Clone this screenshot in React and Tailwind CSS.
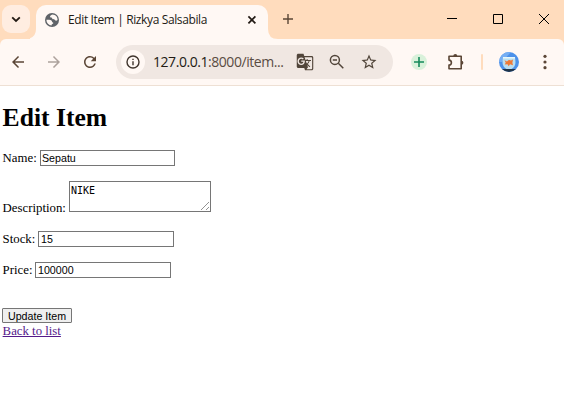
import React from "react";
import { MdArrowBack, MdArrowForward, MdRefresh, MdGTranslate, MdStarBorder } from "react-icons/md";

function TabStrip() {
  return (
    <div className="flex h-[39px] items-start bg-[#ffdcbd]">
      <div className="ml-[2px] mt-[5px] flex h-7 w-7 items-center justify-center rounded-[9px] bg-[#ffede1]">
        <svg width="10" height="7" viewBox="0 0 10 7" fill="none" stroke="#221a14" strokeWidth="1.8">
          <path d="M1.2 1.3 5 5l3.8-3.7" />
        </svg>
      </div>
      <svg className="mt-[29px] h-[10px] w-[6px] shrink-0" viewBox="0 0 6 10" fill="#fff8f4">
        <path d="M6 0v10H0V9.3Q6 7 6 0z" />
      </svg>
      <div className="mt-[5px] flex h-[34px] w-[232px] items-center rounded-t-[10px] bg-[#fff8f4] pb-[5px]">
        <svg className="ml-[9px] shrink-0" width="14" height="14" viewBox="0 0 14 14">
          <circle cx="7" cy="7" r="7" fill="#5f6368" />
          <path d="M7.5 1.4C5.6 2 4.6 3 5.2 4c.5.8 1.7.3 1.9 1.3.1.9 1.2 1.1 2.2 1.1.9.1.8 1.2 1.8 1.3.8 0 1.2-.4 1.5-.9A5.6 5.6 0 0 0 7.5 1.4z" fill="#fff8f4" />
          <path d="M1.4 6.8c1.7.1 3.9-.2 5 .8.8.8.5 1.8 1.5 2 .7.1.5 1.2-.4 1.3-.9.2-.9.8-.8 1.6A5.6 5.6 0 0 1 1.4 6.8z" fill="#fff8f4" />
        </svg>
        <span className="ml-[9px] w-[142px] whitespace-nowrap font-['Open_Sans',sans-serif] text-[12px] leading-4 tracking-[-0.38px] text-[#221a14]">
          Edit Item | Rizkya Salsabila
        </span>
        <svg className="ml-[37px] shrink-0" width="10" height="10" viewBox="0 0 10 10" stroke="#221a14" strokeWidth="1.7">
          <path d="m1.4 1.4 7 7m0-7-7 7" />
        </svg>
      </div>
      <svg className="mt-[29px] h-[10px] w-[10px]" viewBox="0 0 10 10" fill="#fff8f4">
        <path d="M0 0v10h10Q0 10 0 0z" />
      </svg>
      <svg className="ml-[5px] mt-[14px]" width="10" height="10" viewBox="0 0 10 10" stroke="#5b4636" strokeWidth="1.4">
        <path d="M0 5h10M5 0v10" />
      </svg>
      <svg className="ml-[154px] mt-[14px]" width="10" height="10" viewBox="0 0 10 10" stroke="#000">
        <path d="M0 4.5h10" />
      </svg>
      <svg className="ml-9 mt-[14px]" width="10" height="10" viewBox="0 0 10 10" stroke="#000" fill="none">
        <path d="M.5.5h9v9h-9z" />
      </svg>
      <svg className="ml-9 mt-[14px]" width="10" height="10" viewBox="0 0 10 10" stroke="#000">
        <path d="m0 0 10 10M10 0 0 10" />
      </svg>
    </div>
  );
}

function AddressBar() {
  return (
    <div className="ml-[17px] flex h-[34px] w-[277px] items-center rounded-full bg-[#f0e7e2]">
      <div className="ml-[5px] flex h-6 w-6 items-center justify-center rounded-full bg-[#fff8f4]">
        <svg width="14" height="14" viewBox="0 0 14 14" fill="none" stroke="#40352d" strokeWidth="1.4">
          <circle cx="7" cy="7" r="6" />
          <path d="M7 6.2v4M7 3.7v1.4" />
        </svg>
      </div>
      <span className="ml-2 w-[136px] whitespace-nowrap font-['Open_Sans',sans-serif] text-[14px] leading-5 tracking-[-0.45px] text-[#5a4c43]">
        <span className="text-[#221a14]">127.0.0.1</span>:8000/item...
      </span>
      <MdGTranslate className="ml-[7px] h-[18px] w-[18px] text-[#51453a]" />
      <svg className="ml-[15px]" width="16" height="16" viewBox="0 0 16 16" fill="none" stroke="#51453a" strokeWidth="1.5">
        <circle cx="5.9" cy="5.9" r="4.5" />
        <path d="m9.3 9.3 5 5M3.8 5.9H8" />
      </svg>
      <MdStarBorder className="ml-[15px] h-[18px] w-[18px] text-[#51453a]" />
    </div>
  );
}

function Toolbar() {
  return (
    <div className="bg-[#ffdcbd]">
      <div className="flex h-[47px] items-center rounded-t-[6px] border-b border-[#eee0d4] bg-[#fff8f4]">
        <MdArrowBack className="ml-[9px] h-[18px] w-[18px] text-[#5b4636]" />
        <MdArrowForward className="ml-[18px] h-[18px] w-[18px] text-[#ada29c]" />
        <MdRefresh className="ml-[18px] h-[18px] w-[18px] text-[#5b4636]" />
        <AddressBar />
        <div className="ml-[18px] flex h-4 w-4 items-center justify-center rounded-full bg-[#d9f1da]">
          <svg width="10" height="10" viewBox="0 0 10 10" stroke="#158a5b" strokeWidth="1.6">
            <path d="M0 5h10M5 0v10" />
          </svg>
        </div>
        <svg className="ml-5" width="18" height="18" viewBox="0 0 18 18" fill="none" stroke="#5b4636" strokeWidth="1.6" strokeLinejoin="round">
          <path d="M2 3.2h12.2v12.6H2v-3.7c3.2-.3 3.2-4.6 0-5z" />
          <path d="M6.3 3a2 2 0 0 1 4 0zM14.4 7.7a2 2 0 0 1 0 4z" fill="#5b4636" stroke="none" />
        </svg>
        <div className="ml-[16px] h-4 w-[2px] rounded-full bg-[#ffdcbd]" />
        <svg className="ml-4" width="20" height="20" viewBox="0 0 20 20">
          <defs>
            <clipPath id="avatar">
              <circle cx="10" cy="10" r="10" />
            </clipPath>
          </defs>
          <g clipPath="url(#avatar)">
            <path d="M0 0h20v20H0z" fill="#4c91ea" />
            <path d="M0 0h12L3 10H0z" fill="#75aef3" />
            <path d="M3 17h14v3H3z" fill="#203449" />
            <path d="M4 5h12l.5 5q0 5-4 7h-5q-4-2-4-7z" fill="#b9def0" />
            <path d="M4 5h12v1.5H4z" fill="#e8f7fa" />
            <path d="M5.5 8.3 8 9.4q2-2 4-1l2-1-.6 3.4.6 2.5-3-1-1.3 2-1.2-2-2.7.3.9-2z" fill="#ef7936" />
          </g>
        </svg>
        <svg className="ml-6" width="4" height="16" viewBox="0 0 4 16" fill="#5b4636">
          <circle cx="2" cy="2.3" r="1.6" />
          <circle cx="2" cy="8" r="1.6" />
          <circle cx="2" cy="13.7" r="1.6" />
        </svg>
      </div>
    </div>
  );
}

const inputClass =
  "block h-4 border border-[#767676] bg-white font-['Liberation_Sans',Arial,sans-serif] text-[10.67px] leading-[14px] text-black outline-none";

function ItemForm() {
  return (
    <main className="pl-[2px] font-['Liberation_Serif',serif] text-[12.8px] leading-[17px] text-black">
      <h1 className="mt-[17px] h-[30px] pl-[0.6px] text-[25.6px] font-bold leading-[30px]">Edit Item</h1>
      <form>
        <div className="mt-[17px] flex h-4">
          <label className="w-[38px] shrink-0 whitespace-nowrap pl-[0.6px]">Name:</label>
          <input className={inputClass + " w-[135px] pl-[1px]"} defaultValue="Sepatu" />
        </div>
        <div className="mt-[15px] flex h-[31px]">
          <label className="w-[67px] shrink-0 whitespace-nowrap pl-[0.6px] pt-[19px]">Description:</label>
          <div className="grid">
            <textarea
              className="col-start-1 row-start-1 block h-[31px] w-[142px] resize-none overflow-hidden border border-[#767676] bg-white px-[1px] pt-[3px] font-['DejaVu_Sans_Mono',monospace] text-[10px] leading-[12px] outline-none"
              defaultValue="NIKE"
            />
            <svg className="pointer-events-none z-10 col-start-1 row-start-1 mb-[2px] mr-[2px] self-end justify-self-end" width="8" height="8" viewBox="0 0 8 8" stroke="#777" strokeWidth=".8">
              <path d="M0 8 8 0M5 8l3-3" />
            </svg>
          </div>
        </div>
        <div className="mt-[19px] flex h-4">
          <label className="w-9 shrink-0 whitespace-nowrap pl-[0.6px]">Stock:</label>
          <input className={inputClass + " w-[136px] pl-[2px]"} defaultValue="15" />
        </div>
        <div className="mt-[15px] flex h-4">
          <label className="w-[33px] shrink-0 whitespace-nowrap pl-[0.6px]">Price:</label>
          <input className={inputClass + " w-[136px] pl-[2px]"} defaultValue="100000" />
        </div>
        <button
          type="button"
          className="mt-[30px] block h-[15px] w-[70px] whitespace-nowrap rounded-[1px] border border-[#767676] bg-[#efefef] font-['Liberation_Sans',Arial,sans-serif] text-[10.67px] leading-[14px]"
        >
          Update Item
        </button>
      </form>
      <a href="#" className="ml-[0.6px] block w-fit text-[#551a8b] underline">
        Back to list
      </a>
    </main>
  );
}

export default function App() {
  return (
    <div className="h-[411px] w-[564px] overflow-hidden bg-white">
      <TabStrip />
      <Toolbar />
      <ItemForm />
    </div>
  );
}
